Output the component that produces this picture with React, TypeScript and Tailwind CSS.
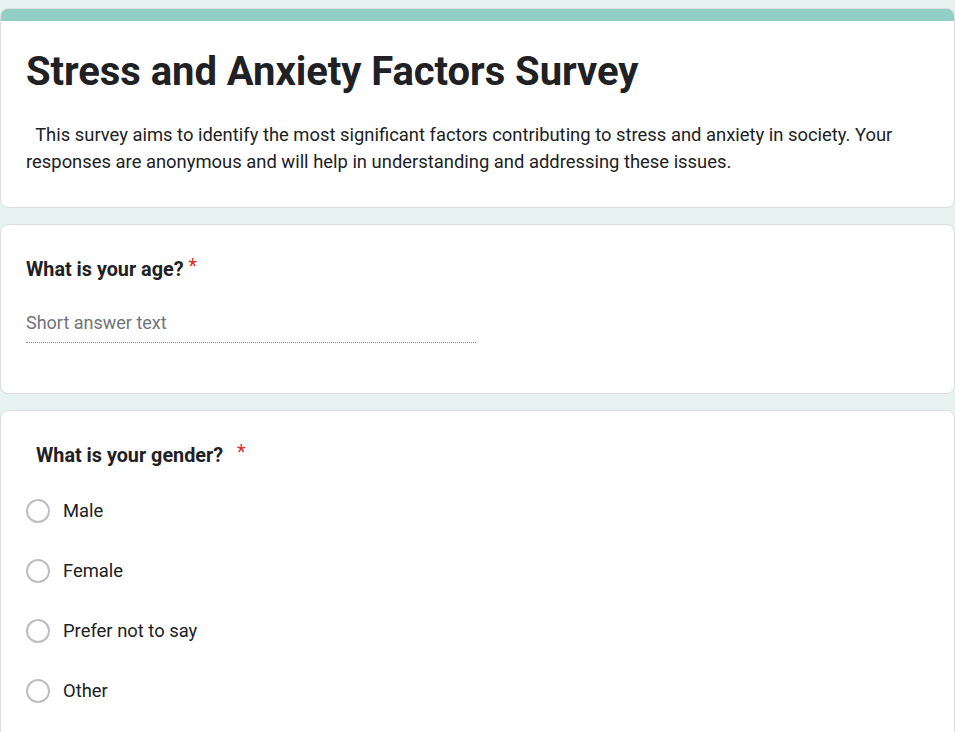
import React from "react";

const options = ["Male", "Female", "Prefer not to say", "Other"];

const App: React.FC = () => {
  return (
    <div className="min-h-[732px] bg-[#e8f3f1] pt-2 flex flex-col gap-4 font-['Roboto',sans-serif] text-[#202124]">
      {/* Header card */}
      <div className="bg-white rounded-lg border border-[#dadce0] overflow-hidden">
        <div className="h-[12px] bg-[#91cec3]" />
        <div className="px-[25px] pt-[27px] pb-[32px]">
          <h1 className="text-[40px] font-bold leading-[48px] m-0 tracking-[-0.05px]">Stress and Anxiety Factors Survey</h1>
          <p className="mt-[25px] text-[18.4px] leading-[27px] whitespace-pre-wrap">
            {"  This survey aims to identify the most significant factors contributing to stress and anxiety in society. Your responses are anonymous and will help in understanding and addressing these issues."}
          </p>
        </div>
      </div>

      {/* Age question */}
      <div className="bg-white rounded-lg border border-[#dadce0] h-[170px] px-[25px] pt-[33px]">
        <div className="text-[19.8px] font-bold leading-6 flex items-start">
          What is your age?
          <span className="text-[#d93025] font-normal ml-[5px] -mt-[3px]">*</span>
        </div>
        <div className="mt-[29px] w-[450px] border-b border-dotted border-[#8a8a8a] pb-[7px] text-[18px] text-[#70757a] leading-6">
          Short answer text
        </div>
      </div>

      {/* Gender question */}
      <div className="bg-white rounded-lg border border-[#dadce0] px-[25px] pt-[33px] pb-[60px]">
        <div className="pl-[10px] text-[19.8px] font-bold leading-6 flex items-start">
          What is your gender?
          <span className="text-[#d93025] font-normal ml-[14px] -mt-[3px]">*</span>
        </div>
        <div className="mt-[31px] flex flex-col gap-9">
          {options.map((o) => (
            <label key={o} className="flex items-center gap-[13px] text-[18.4px] leading-6">
              <span className="w-6 h-6 rounded-full border-2 border-[#bdbdbd] shrink-0" />
              {o}
            </label>
          ))}
        </div>
      </div>
    </div>
  );
};

export default App;
